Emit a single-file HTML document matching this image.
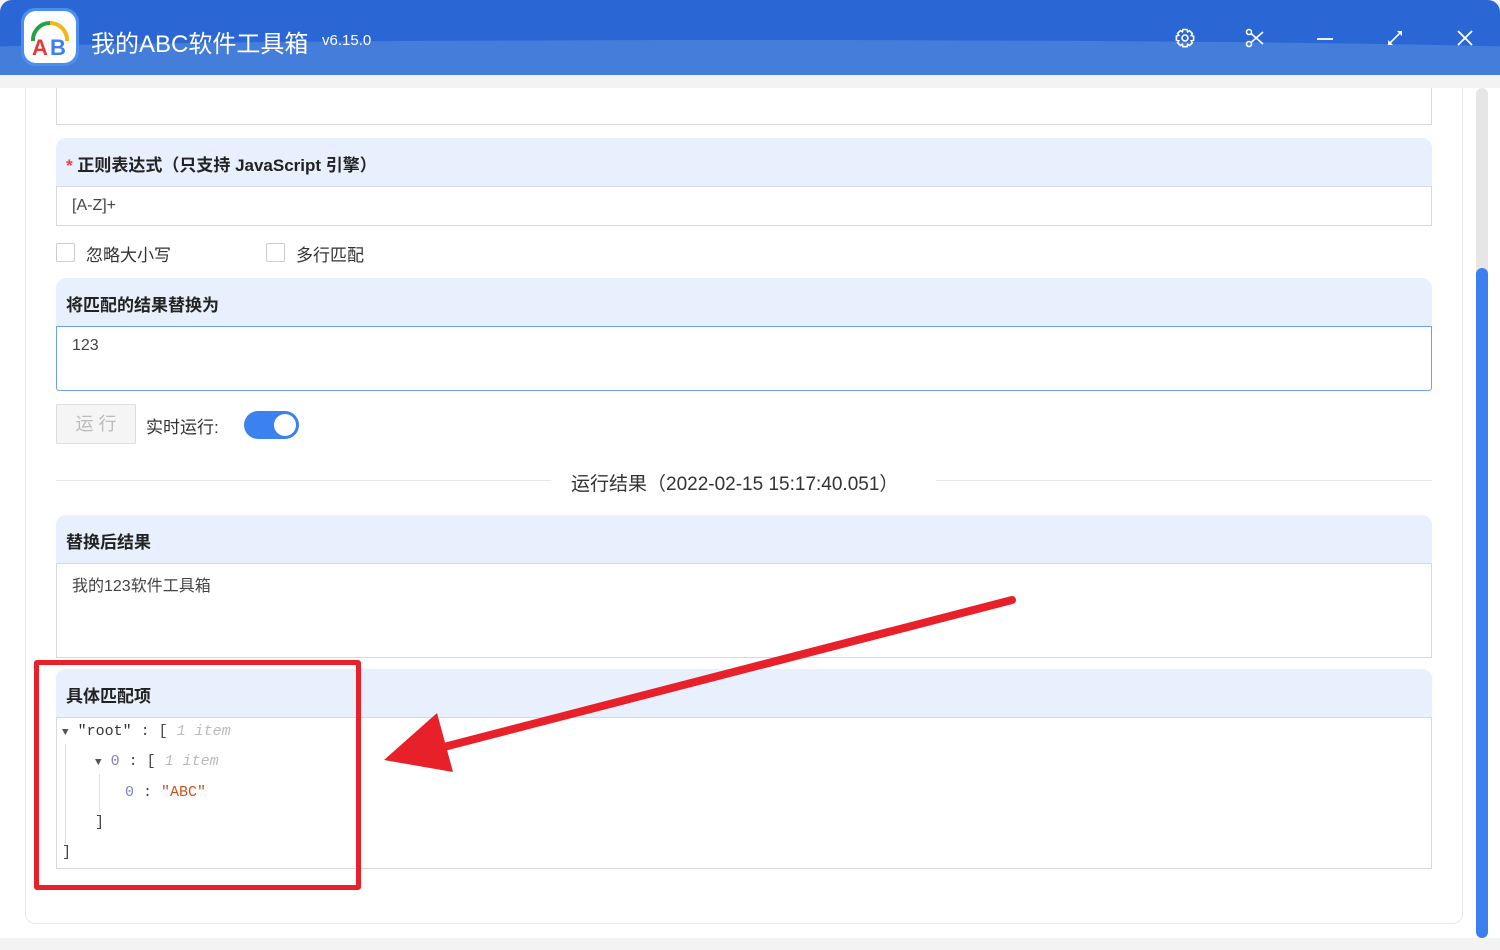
<!DOCTYPE html>
<html><head><meta charset="utf-8"><style>
*{box-sizing:border-box;margin:0;padding:0}
body{width:1500px;height:950px;overflow:hidden;background:#f3f3f3;font-family:"Liberation Sans","Noto Sans CJK SC",sans-serif;position:relative;color:#333}
.hdr{position:absolute;left:0;top:0;width:1500px;height:75px;background:#2a67d5;border-radius:12px 12px 0 0;overflow:hidden}
.wave{position:absolute;left:-100px;top:40px;width:1700px;height:120px;background:#457dda;border-radius:50% 50% 0 0/10% 10% 0 0}
.logo{position:absolute;left:21px;top:8px;width:58px;height:58px;border-radius:14px;background:#4a8ef0;padding:3px}
.logo div{width:100%;height:100%;background:#fff;border-radius:12px;position:relative}
.title{position:absolute;left:91px;top:24px;color:#fff;font-size:24px}
.ver{position:absolute;left:322px;top:32px;color:#fff;font-size:15px}
.ic{position:absolute;top:28px}
.main{position:absolute;left:0;top:88px;width:1500px;height:850px;background:#fff}
.card{position:absolute;left:25px;top:0;width:1438px;height:836px;border:1px solid #e8e8e8;border-top:none;border-radius:0 0 10px 10px;background:#fff}
.track{position:absolute;left:1476px;top:88px;width:12px;height:850px;background:#e6e6e6;border-radius:6px}
.thumb{position:absolute;left:1476px;top:268px;width:12px;height:670px;background:#3b7ff0;border-radius:6px}
.sec{position:absolute;left:56px;width:1376px}
.lab{background:#e8f0fd;border-radius:10px 10px 0 0;height:48px;padding:13px 10px;font-weight:bold;font-size:17px;color:#222}
.box{border:1px solid #d9d9d9;background:#fff;font-size:16px;padding:10px 15px;color:#444}
.cb{position:absolute;top:243px;width:19px;height:19px;border:1px solid #ccc;border-radius:2px}
.t{position:absolute;font-size:17px;color:#333}
</style></head><body>
<div class="hdr"><div class="wave"></div>
<div class="logo"><div><svg width="52" height="52" viewBox="0 0 52 52"><path d="M9 30 A17 17 0 0 1 26 12" stroke="#23a347" stroke-width="4" fill="none"/><path d="M26 12 A17 17 0 0 1 43 30" stroke="#f2b61b" stroke-width="4" fill="none"/><text x="8" y="44" font-size="22" font-family="Liberation Sans" fill="#e53935" font-weight="bold">A</text><text x="26" y="44" font-size="22" font-family="Liberation Sans" fill="#3b7ff0" font-weight="bold">B</text></svg></div></div>
<div class="title">我的ABC软件工具箱</div><div class="ver">v6.15.0</div>
<svg class="ic" style="left:1175px" width="20" height="20" viewBox="0 0 20 20" fill="none" stroke="#fff" stroke-width="1.6"><path d="M8 1.5h4l.6 2.4 2-1.2 2.8 2.8-1.2 2 2.4.6v4l-2.4.6 1.2 2-2.8 2.8-2-1.2-.6 2.4H8l-.6-2.4-2 1.2-2.8-2.8 1.2-2-2.4-.6V8l2.4-.6-1.2-2 2.8-2.8 2 1.2z"/><circle cx="10" cy="10" r="3"/></svg>
<svg class="ic" style="left:1245px" width="20" height="20" viewBox="0 0 20 20" fill="none" stroke="#fff" stroke-width="1.6"><circle cx="4" cy="4" r="2.5"/><circle cx="4" cy="16" r="2.5"/><path d="M6 5.5L18 16M6 14.5L18 4"/></svg>
<svg class="ic" style="left:1315px" width="20" height="20"><path d="M2 11h16" stroke="#fff" stroke-width="1.8"/></svg>
<svg class="ic" style="left:1385px" width="20" height="20" fill="#fff" stroke="#fff" stroke-width="1.6"><path d="M4 16L16 4" /><path d="M12 3h5v5z M3 12v5h5z" stroke-width="0"/></svg>
<svg class="ic" style="left:1455px" width="20" height="20"><path d="M3 3L17 17M17 3L3 17" stroke="#fff" stroke-width="1.8"/></svg>
</div>
<div class="main"><div class="card"></div></div>
<div class="track"></div><div class="thumb"></div>
<div class="sec box" style="top:88px;height:37px;border-top:none"></div>
<div class="sec" style="top:138px"><div class="lab"><span style="color:#f04040">* </span>正则表达式（只支持 JavaScript 引擎）</div><div class="box" style="height:40px;padding-top:10px">[A-Z]+</div></div>
<div class="cb" style="left:56px"></div><div class="t" style="left:86px;top:241px">忽略大小写</div>
<div class="cb" style="left:266px"></div><div class="t" style="left:296px;top:241px">多行匹配</div>
<div class="sec" style="top:278px"><div class="lab">将匹配的结果替换为</div><div class="box" style="height:65px;border-color:#6fa1ef;border-radius:0 0 3px 3px">123</div></div>
<div style="position:absolute;left:56px;top:404px;width:80px;height:40px;border:1px solid #ddd;background:#f5f5f5;color:#bbb;font-size:18px;text-align:center;line-height:38px;border-radius:2px">运 行</div>
<div class="t" style="left:146px;top:413px">实时运行:</div>
<div style="position:absolute;left:244px;top:411px;width:55px;height:28px;border-radius:14px;background:#3b82f0"><div style="position:absolute;right:3px;top:3px;width:22px;height:22px;border-radius:50%;background:#fff"></div></div>
<div style="position:absolute;left:56px;top:480px;width:495px;height:1px;background:#e8e8e8"></div>
<div style="position:absolute;left:936px;top:480px;width:496px;height:1px;background:#e8e8e8"></div>
<div class="t" style="left:571px;top:469px;font-size:19px">运行结果（2022-02-15 15:17:40.051）</div>
<div class="sec" style="top:515px"><div class="lab">替换后结果</div><div class="box" style="height:95px;padding-top:8px">我的123软件工具箱</div></div>
<div class="sec" style="top:669px"><div class="lab">具体匹配项</div><div class="box" style="height:152px;padding:0;position:relative;font-family:'Liberation Mono',monospace;font-size:15px">
<div style="position:absolute;left:5px;top:5px"><span style="color:#555;font-size:11px">▼</span> <span style="color:#333">″root″</span> : [ <i style="color:#bbb">1 item</i></div>
<div style="position:absolute;left:8px;top:26px;width:1px;height:100px;background:#e0e0e0"></div>
<div style="position:absolute;left:38px;top:35px"><span style="color:#555;font-size:11px">▼</span> <span style="color:#8080d0">0</span> : [ <i style="color:#bbb">1 item</i></div>
<div style="position:absolute;left:42px;top:56px;width:1px;height:38px;background:#e0e0e0"></div>
<div style="position:absolute;left:68px;top:66px"><span style="color:#8080d0">0</span> : <span style="color:#d2521e">″ABC″</span></div>
<div style="position:absolute;left:38px;top:96px">]</div>
<div style="position:absolute;left:5px;top:126px">]</div>
</div></div>
<div style="position:absolute;left:34px;top:660px;width:327px;height:230px;border:5px solid #e8202a;border-radius:3px"></div>
<svg style="position:absolute;left:0;top:0" width="1500" height="950"><path d="M1012 600 L440 748" stroke="#e8202a" stroke-width="8" stroke-linecap="round"/><path d="M384 760 L437 713 L453 772 Z" fill="#e8202a"/></svg>
</body></html>
